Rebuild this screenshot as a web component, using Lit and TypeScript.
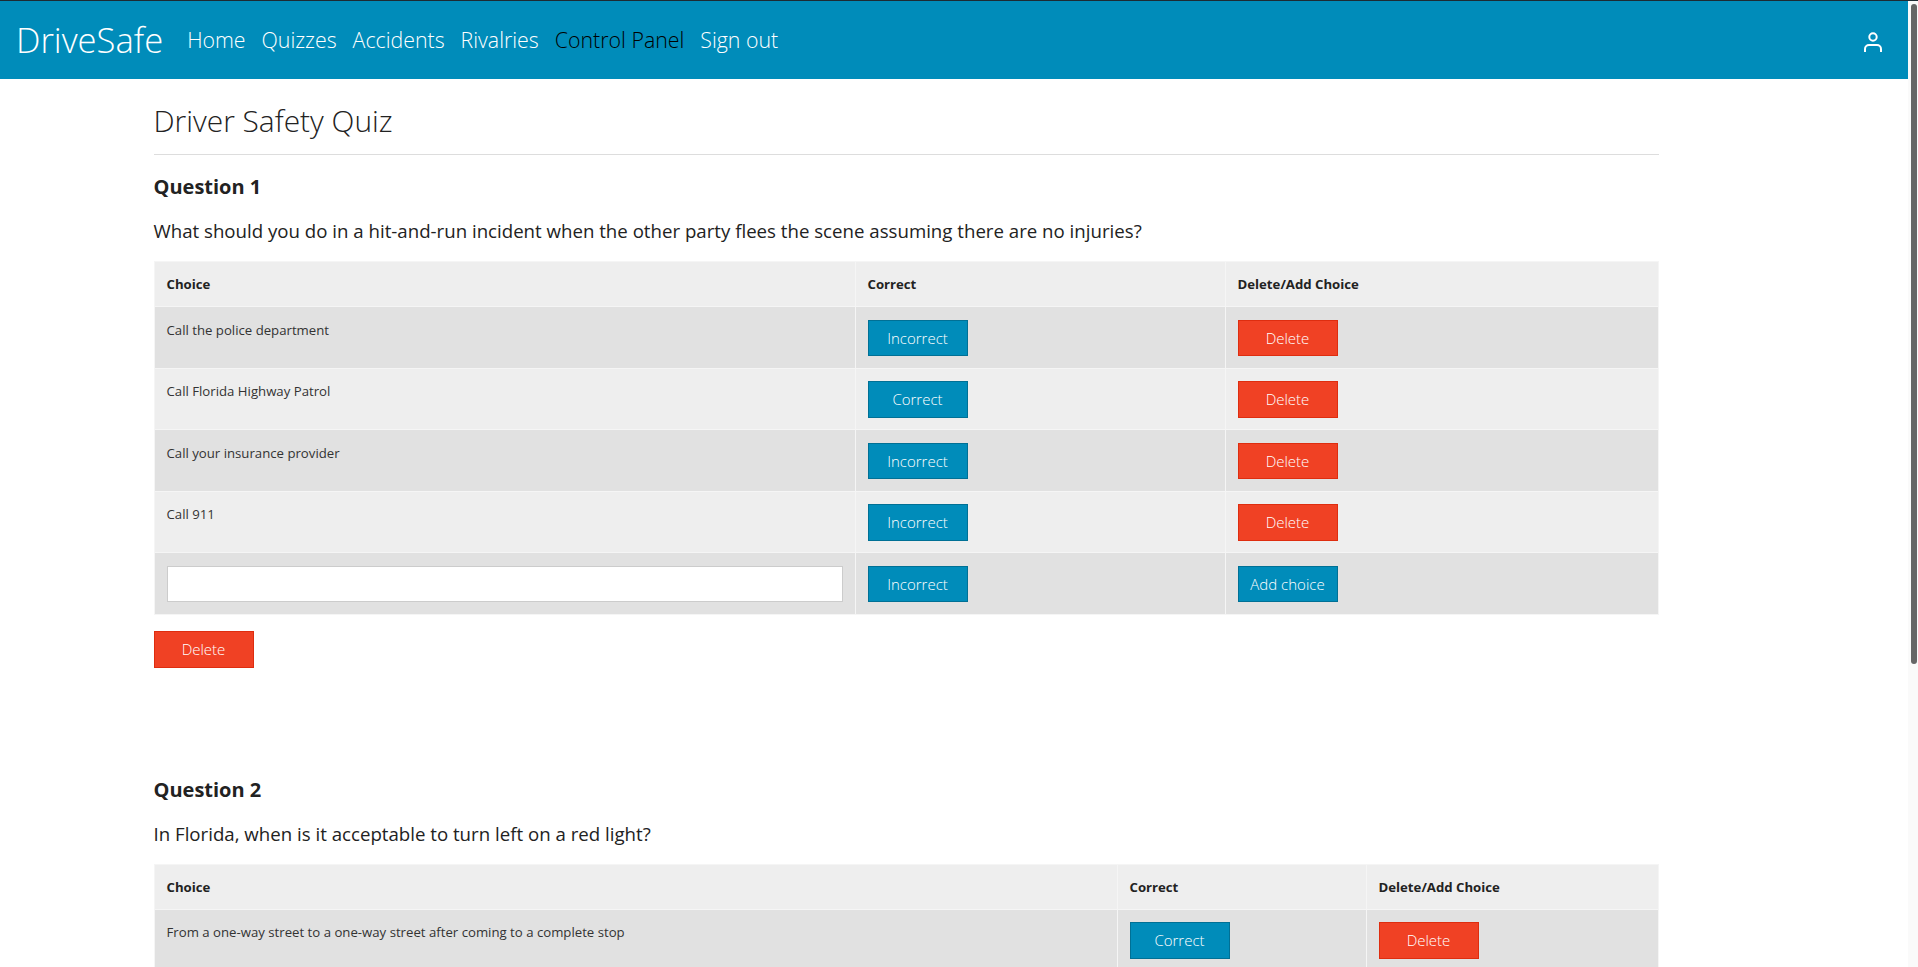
import { LitElement, html, css } from "lit";
import { customElement } from "lit/decorators.js";

const QUESTIONS = [
  {
    title: "Question 1",
    text: "What should you do in a hit-and-run incident when the other party flees the scene assuming there are no injuries?",
    cols: [701, 370],
    choices: [
      ["Call the police department", "Incorrect"],
      ["Call Florida Highway Patrol", "Correct"],
      ["Call your insurance provider", "Incorrect"],
      ["Call 911", "Incorrect"],
    ],
  },
  {
    title: "Question 2",
    text: "In Florida, when is it acceptable to turn left on a red light?",
    cols: [963, 249],
    choices: [
      ["From a one-way street to a one-way street after coming to a complete stop", "Correct"],
      ["From a two-way street to a one-way street after coming to a complete stop", "Incorrect"],
    ],
  },
];

@customElement("app-root")
export class AppRoot extends LitElement {
  static styles = css`
    :host {
      display: block;
      font-family: "Open Sans", "Liberation Sans", sans-serif;
      color: #222;
      background: #fff;
    }

    .nav {
      box-sizing: border-box;
      height: 79px;
      border-top: 1px solid #1d2b33;
      background: #008cba;
      display: flex;
      align-items: center;
      padding: 0 33px 0 16px;
      font-weight: 300;
    }

    .brand {
      font-size: 34.6px;
      color: #fff;
      margin-right: 24px;
      margin-bottom: 1px;
    }

    .links {
      display: flex;
      gap: 16px;
      flex: 1;
      margin-bottom: 2px;
    }

    .links a {
      font-size: 21.33px;
      color: #fff;
    }

    .links a.dark {
      color: #000;
    }

    .user {
      width: 24px;
      height: 24px;
      display: block;
      margin-top: 4px;
    }

    .main {
      width: 1505.5px;
      margin-left: 153.5px;
      padding-bottom: 60px;
    }

    h1 {
      margin: 0;
      padding: 21px 0 13px;
      font-size: 29.9px;
      line-height: 41px;
      font-weight: 300;
      border-bottom: 1px solid #ddd;
    }

    h2 {
      margin: 17px 0 0;
      font-size: 20px;
      line-height: 30px;
      font-weight: 700;
    }

    p {
      margin: 14px 0 15px;
      font-size: 18.67px;
      line-height: 30px;
    }

    table {
      width: 100%;
      table-layout: fixed;
      border-collapse: collapse;
      font-size: 13.2px;
    }

    th,
    td {
      padding: 12px;
      border: 1px solid #f5f5f5;
      text-align: left;
      vertical-align: top;
    }

    th {
      font-weight: 700;
      line-height: 20px;
      background: #eee;
    }

    tbody tr:nth-child(odd) {
      background: #e1e1e1;
    }

    tbody tr:nth-child(even) {
      background: #eee;
    }

    td {
      padding-top: 12.5px;
      padding-bottom: 11.5px;
      line-height: 21px;
      color: #333;
    }

    input {
      display: block;
      width: 100%;
      height: 36.5px;
      box-sizing: border-box;
      border: 1px solid #ccc;
      background: #fff;
    }

    button {
      display: block;
      width: 100px;
      height: 36.5px;
      padding: 0;
      border: 1px solid #007095;
      background: #008cba;
      color: #fff;
      font-family: inherit;
      font-size: 15px;
      font-weight: 300;
    }

    button.red {
      border-color: #de2d0f;
      background: #f04124;
    }

    .remove {
      margin: 16.5px 0 107px;
    }

    .bar {
      position: fixed;
      top: 1px;
      right: 0;
      bottom: 0;
      width: 10px;
      background: #fafafa;
    }

    .thumb {
      margin: 3px 1px 0 3px;
      height: 660px;
      border-radius: 3px;
      background: #666;
    }
  `;

  renderQuestion(q: (typeof QUESTIONS)[number]) {
    return html`
      <h2>${q.title}</h2>
      <p>${q.text}</p>
      <table>
        <colgroup>
          <col style="width: ${q.cols[0]}px" />
          <col style="width: ${q.cols[1]}px" />
          <col />
        </colgroup>
        <thead>
          <tr>
            <th>Choice</th>
            <th>Correct</th>
            <th>Delete/Add Choice</th>
          </tr>
        </thead>
        <tbody>
          ${q.choices.map(
            ([label, state]) => html`<tr>
              <td>${label}</td>
              <td><button>${state}</button></td>
              <td><button class="red">Delete</button></td>
            </tr>`
          )}
          <tr>
            <td><input type="text" /></td>
            <td><button>Incorrect</button></td>
            <td><button>Add choice</button></td>
          </tr>
        </tbody>
      </table>
      <button class="red remove">Delete</button>
    `;
  }

  render() {
    return html`
      <div class="nav">
        <span class="brand">DriveSafe</span>
        <div class="links">
          <a>Home</a>
          <a>Quizzes</a>
          <a>Accidents</a>
          <a>Rivalries</a>
          <a class="dark">Control Panel</a>
          <a>Sign out</a>
        </div>
        <svg class="user" viewBox="0 0 24 24" fill="none" stroke="#fff" stroke-width="2">
          <circle cx="12" cy="7" r="3.7" />
          <path d="M4 22v-3a4 4 0 0 1 4-4h8a4 4 0 0 1 4 4v3" />
        </svg>
      </div>
      <div class="main">
        <h1>Driver Safety Quiz</h1>
        ${QUESTIONS.map((q) => this.renderQuestion(q))}
      </div>
      <div class="bar"><div class="thumb"></div></div>
    `;
  }
}
